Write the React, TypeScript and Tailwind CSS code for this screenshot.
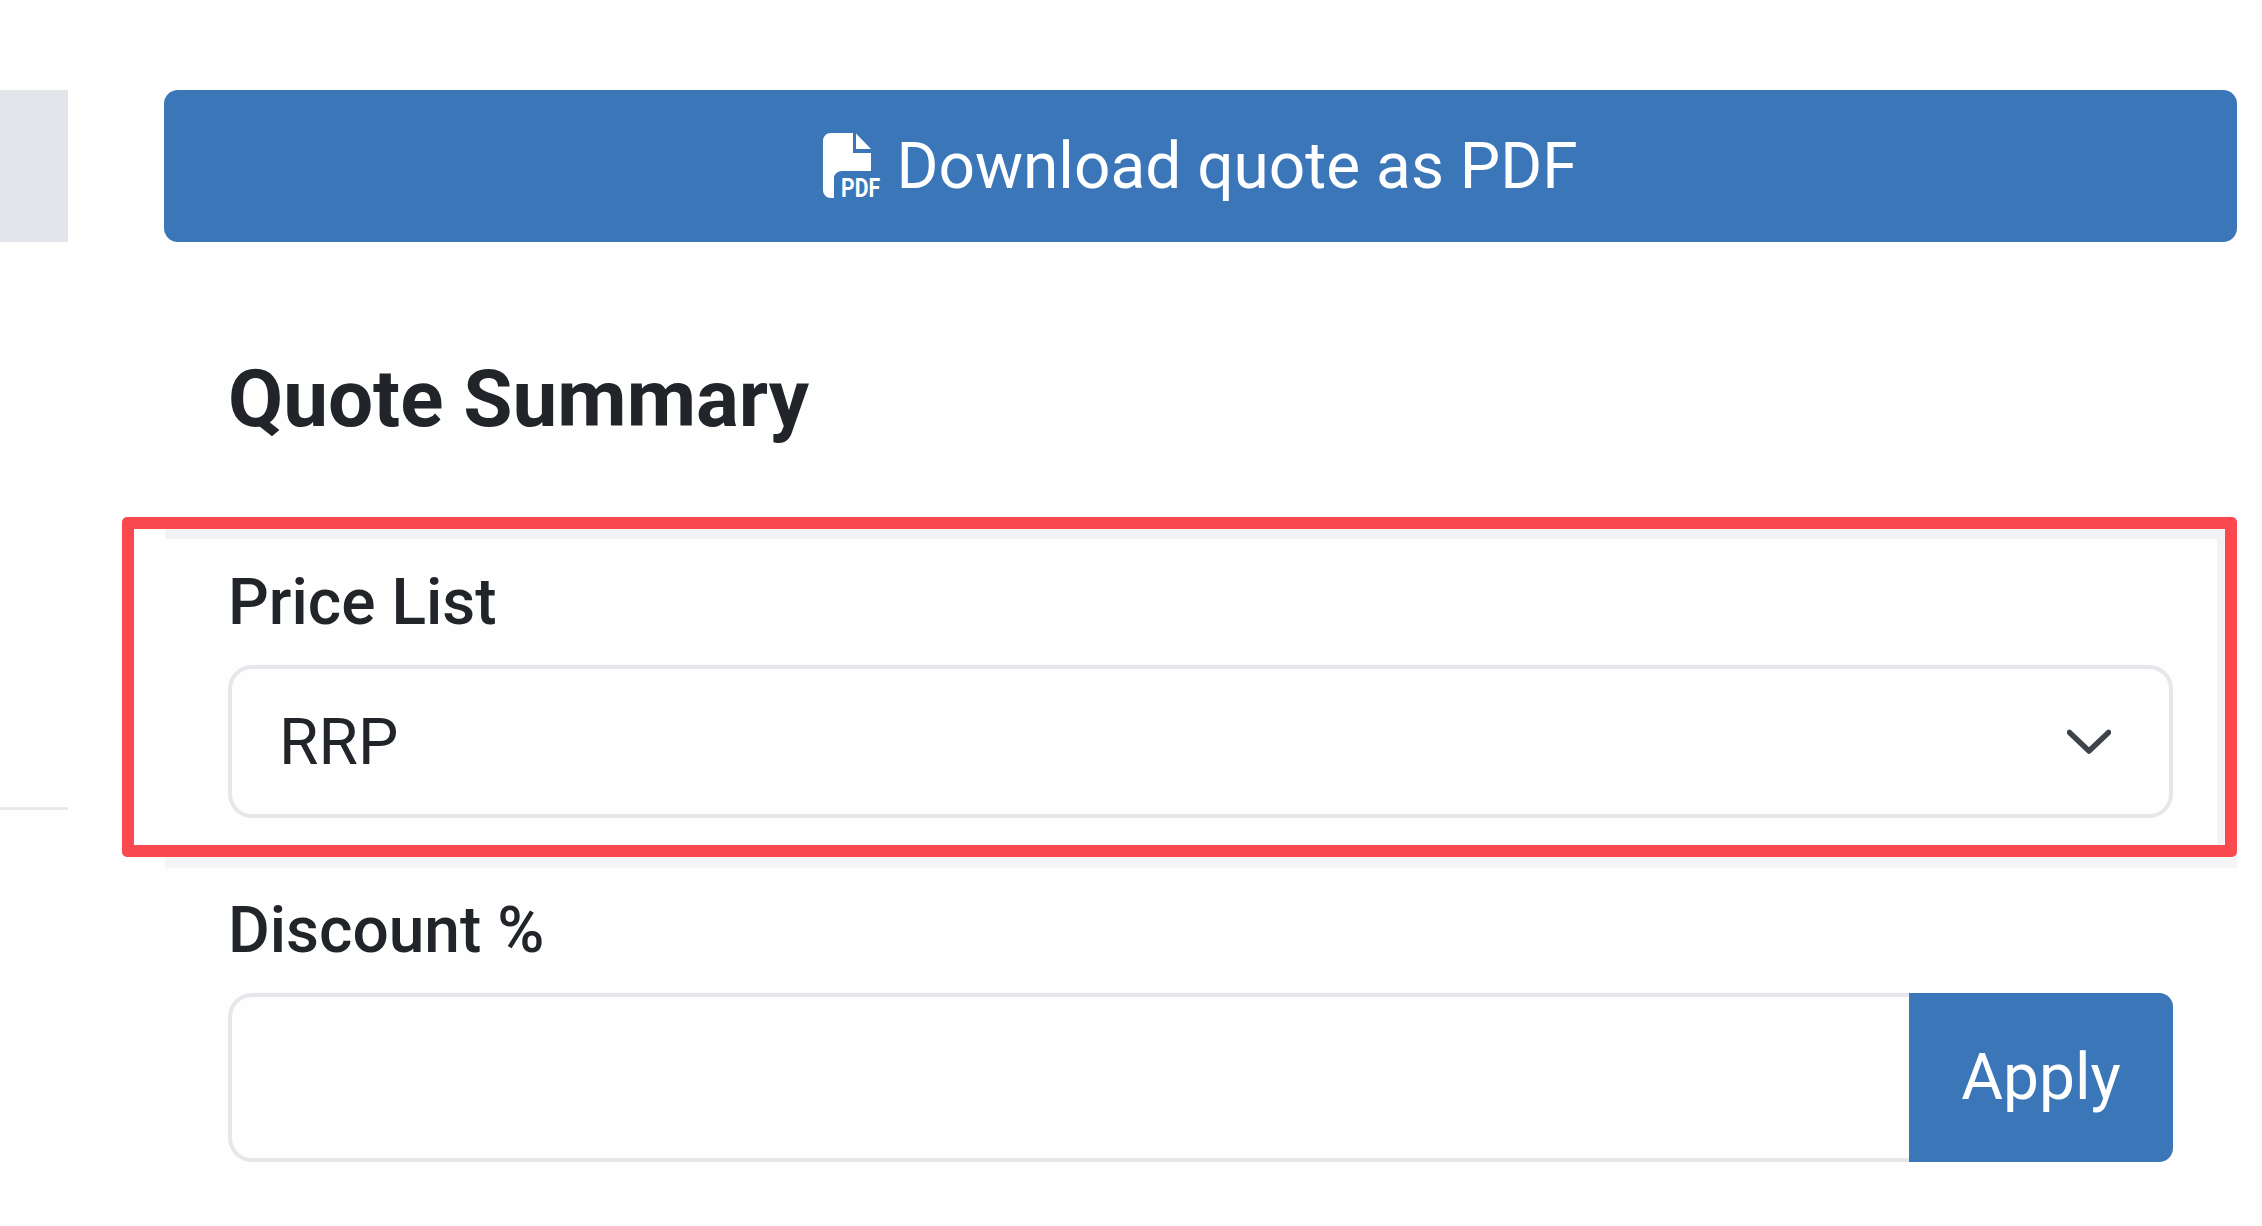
const PdfIcon = () => (
  <svg width="58" height="66" viewBox="0 0 58 66" className="shrink-0 overflow-visible" fill="none" aria-hidden="true">
    <path d="M8 0H30V20H48V38H19C15 38 11 41 11 45V65H8C3.5 65 0 61.500 0 57V8C0 3.500 3.500 0 8 0Z" fill="#fff" />
    <path d="M33 0.500L48 16H33Z" fill="#fff" />
    <text
      x="18"
      y="64"
      fill="#fff"
      fontFamily="Roboto, sans-serif"
      fontSize="25"
      fontWeight="700"
      textLength="39"
      lengthAdjust="spacingAndGlyphs"
    >
      PDF
    </text>
  </svg>
)

const ChevronIcon = () => (
  <svg width="44" height="26" viewBox="0 0 44 26" fill="none" aria-hidden="true">
    <path d="M2.500 3.500L22 22L41.500 3.500" stroke="#3f444b" strokeWidth="5.500" strokeLinecap="round" strokeLinejoin="round" />
  </svg>
)

export default function App() {
  return (
    <div className="flex min-h-[1226px] items-start gap-[96px] overflow-hidden bg-[#fefefe] pt-[90px] font-['Roboto',sans-serif] text-[#212529]">
      <div className="w-[68px] shrink-0">
        <div className="h-[152px] bg-[#e1e4e8]" />
        <div className="mt-[565px] h-[3px] bg-[#e7e9ec]" />
      </div>

      <div className="relative w-[2073px] shrink-0">
        <button className="flex h-[152px] w-full items-center justify-center gap-[15px] rounded-[14px] bg-[#3a76b8] text-[64px] text-white">
          <PdfIcon />
          <span className="translate-y-[1px]">Download quote as PDF</span>
        </button>

        <h2 className="mt-[115px] pl-[64px] text-[80px] leading-[84px] font-bold">Quote Summary</h2>

        <div className="mt-[127px] px-[64px]">
          <label className="block text-[64px] leading-[70px] font-medium">Price List</label>
          <div className="mt-[27px] flex h-[153px] items-center justify-between rounded-[24px] border-[4px] border-[#e5e7ea] bg-[#fefefe] pr-[58px] pl-[47px] text-[64px]">
            <span className="translate-y-[1px]">RRP</span>
            <ChevronIcon />
          </div>

          <label className="mt-[78px] block text-[64px] leading-[70px] font-medium">Discount %</label>
          <div className="mt-[27px] flex h-[169px]">
            <input className="min-w-0 flex-1 rounded-l-[24px] border-[4px] border-r-0 border-[#e5e7ea] bg-[#fefefe] outline-none" />
            <button className="w-[264px] rounded-r-[14px] bg-[#3a76b8] text-[64px] text-white">Apply</button>
          </div>
        </div>

        {/* highlight drawn over the price list row */}
        <div className="pointer-events-none absolute top-[427px] left-[-42px] h-[340px] w-[2115px] rounded-[5px] border-[12px] border-[#fa4a50]">
          <div className="absolute top-0 right-0 left-[31px] h-[10px] bg-[#f2f3f5]" />
          <div className="absolute top-0 right-0 bottom-0 w-[8px] bg-[#f2f3f5]" />
          <div className="absolute top-[328px] right-[-12px] left-[31px] h-[11px] bg-[#f4f5f7]" />
        </div>
      </div>
    </div>
  )
}
